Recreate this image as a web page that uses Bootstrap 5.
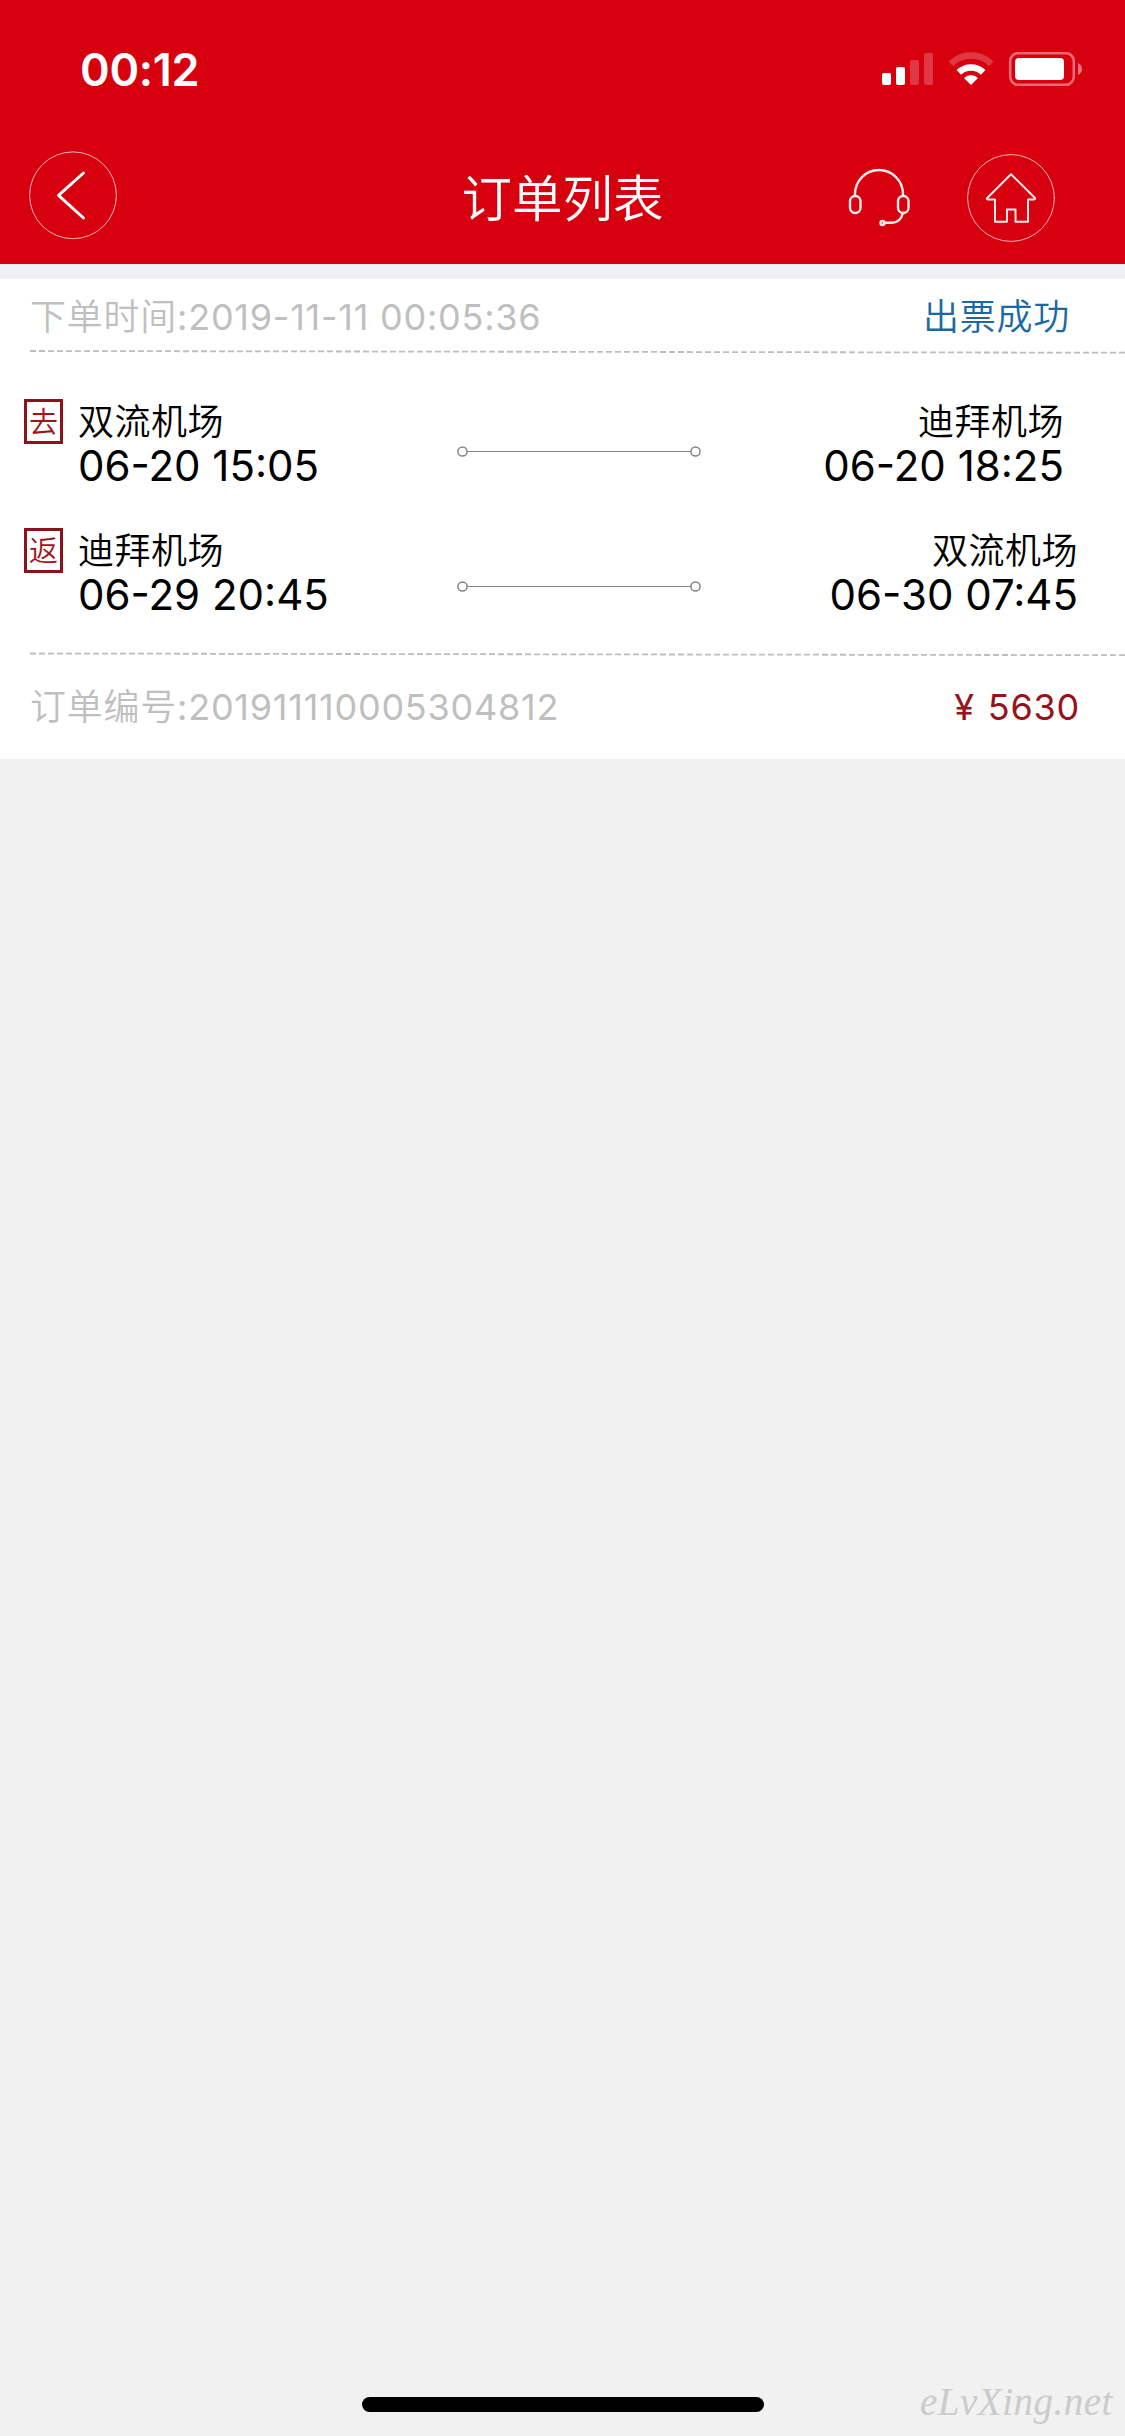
<!DOCTYPE html>
<html lang="zh-CN">
<head>
<meta charset="utf-8">
<meta name="viewport" content="width=device-width, initial-scale=1">
<title>订单列表</title>
<link href="https://cdn.jsdelivr.net/npm/bootstrap@5.3.0/dist/css/bootstrap.min.css" rel="stylesheet">
<style>
body{background:#f1f1f1;font-family:Inter,"Noto Sans CJK SC",sans-serif;color:#000;height:2436px;overflow:hidden}
.top-area{background:#d7000f;height:264px;border-bottom:1px solid #c20713}
.status-row{height:88px;padding:52px 42px 0 80px}
.clock{font-size:45px;font-weight:600;line-height:35px;letter-spacing:-.3px}
.title-row{height:175px;padding:0 70px 0 29px}
.page-title{font-size:50.5px;font-weight:350;line-height:60px;top:81px}
.strip{height:15px;background:#edf0f4}
.order{height:480px}
.meta{font-size:36px;line-height:44px;padding-left:30px;color:#bfbfbf;letter-spacing:.76px;font-weight:350}
.figures{font-weight:400}
.order-head{height:70px;padding-top:16px;padding-right:55px}
.order-foot{height:103px;padding-top:28px;padding-right:45px}
.ok{color:#1b69a3}
.price{color:#97131a;word-spacing:2px}
.leg{height:129px;padding-left:24px}
.leg-out{margin-top:44px}
.leg-back{height:123px}
.tag-box{width:39px;height:45px;border:3px solid #8d1219;color:#a3131a;font-size:29px;line-height:42px;margin-right:15px;font-weight:350}
.stop{width:330px;padding-top:2px}
.leg-out .stop.text-end{margin-right:61px}
.leg-back .stop.text-end{margin-right:47px}
.place{font-size:36px;line-height:42px;letter-spacing:.5px;font-weight:350}
.when{font-size:42px;line-height:45px}
.trip{margin:47px 0 0 49px}
.leg-back .trip{margin-top:53px}
.home-bar{left:362px;top:2397px;width:402px;height:15px;background:#000}
.site-mark{left:920px;top:2379px;font-family:"Liberation Serif",serif;font-style:italic;font-size:39px;line-height:46px;letter-spacing:.5px;color:#cbcbcb}
svg{display:block;flex:none}
</style>
<script src="https://cdn.jsdelivr.net/npm/bootstrap@5.3.0/dist/js/bootstrap.bundle.min.js"></script>
</head>
<body class="position-relative">
<header class="top-area text-white">
  <div class="status-row d-flex justify-content-between align-items-start">
    <div class="clock">00:12</div>
    <svg width="201" height="36" viewBox="882 52 201 36" fill="#fff">
      <rect x="882" y="73" width="9" height="12" rx="2"/><rect x="896" y="67" width="9" height="18" rx="2"/>
      <g opacity=".22"><rect x="910" y="60" width="9" height="25" rx="2"/><rect x="924" y="53" width="9" height="32" rx="2"/></g>
      <g fill="none" stroke="#fff" stroke-width="6.5"><path d="M950.8 63.8A29 29 0 0 1 991.2 63.8" opacity=".22"/><path d="M958.8 72.300A17.6 17.6 0 0 1 983.2 72.300"/></g>
      <path d="M964 78Q971 72 978 78L971 85Z"/>
      <rect x="1010.2" y="53.2" width="63.6" height="31.600" rx="8" fill="none" stroke="#fff" stroke-width="2.600" opacity=".42"/>
      <rect x="1015" y="58" width="49" height="22" rx="4"/><path d="M1078 63Q1082 65 1082 69T1078 75Z" opacity=".45"/>
    </svg>
  </div>
  <nav class="title-row d-flex justify-content-between position-relative">
    <svg width="90" height="175" viewBox="29 88 90 175" fill="none" stroke="#fff">
      <circle cx="73" cy="195.300" r="43.400" stroke-width="1" opacity=".7"/><path d="M83.500 173L58.500 195.300 83.500 218" stroke-width="3" stroke-linecap="round" stroke-linejoin="round"/>
    </svg>
    <h1 class="page-title position-absolute start-50 translate-middle-x m-0 text-nowrap">订单列表</h1>
    <svg width="209" height="175" viewBox="846 88 209 175" fill="none" stroke="#fff" stroke-linejoin="round" stroke-linecap="round">
      <g stroke-width="2.400" opacity=".92"><path d="M855 195V194A24 24 0 0 1 903 194V195M903 213C901 220 897 222.800 892 222.800H884"/><rect x="850" y="196" width="10.500" height="17" rx="5.200"/><rect x="898" y="196" width="10.500" height="17" rx="5.200"/><circle cx="882.500" cy="223" r="2"/>
      <path stroke-width="2" d="M1011 174.200L987 198.200Q986.600 199.400 988 199.400H995V221.800H1007V209.600H1015.500V221.800H1028V199.400H1034Q1035.600 199.200 1035 198Z"/></g>
      <circle cx="1011" cy="198" r="43.400" stroke-width="1" opacity=".7"/>
    </svg>
  </nav>
</header>
<div class="strip"></div>
<main class="order bg-white d-flex flex-column">
  <div class="order-head meta d-flex justify-content-between"><div>下单时间<span class="figures">:2019-11-11 00:05:36</span></div><span class="ok">出票成功</span></div>
  <svg class="ms-auto" width="1095" height="6"><path d="M0 2L1095 3.700" stroke="#bdbdbd" stroke-width="1.800" stroke-dasharray="6 3"/></svg>
  <section class="legs flex-grow-1">
    <div class="leg leg-out d-flex">
      <div class="tag-box text-center">去</div>
      <div class="stop"><div class="place">双流机场</div><div class="when">06-20 15:05</div></div>
      <svg class="trip" width="245" height="12" fill="none" stroke="#858585" stroke-width="1.500"><circle cx="5.500" cy="5.500" r="4.600"/><path d="M10 5.500H234" stroke-width="1"/><circle cx="238.500" cy="5.500" r="4.600"/></svg>
      <div class="stop text-end ms-auto"><div class="place">迪拜机场</div><div class="when">06-20 18:25</div></div>
    </div>
    <div class="leg leg-back d-flex">
      <div class="tag-box text-center">返</div>
      <div class="stop"><div class="place">迪拜机场</div><div class="when">06-29 20:45</div></div>
      <svg class="trip" width="245" height="12" fill="none" stroke="#858585" stroke-width="1.500"><circle cx="5.500" cy="5.500" r="4.600"/><path d="M10 5.500H234" stroke-width="1"/><circle cx="238.500" cy="5.500" r="4.600"/></svg>
      <div class="stop text-end ms-auto"><div class="place">双流机场</div><div class="when">06-30 07:45</div></div>
    </div>
  </section>
  <svg class="ms-auto" width="1095" height="6"><path d="M0 2.500L1095 4.200" stroke="#bdbdbd" stroke-width="1.800" stroke-dasharray="6 3"/></svg>
  <div class="order-foot meta d-flex justify-content-between"><div>订单编号<span class="figures">:201911110005304812</span></div><span class="price figures">¥ 5630</span></div>
</main>
<div class="home-bar rounded-pill position-absolute"></div>
<div class="site-mark position-absolute text-nowrap">eLvXing.net</div>
</body>
</html>
